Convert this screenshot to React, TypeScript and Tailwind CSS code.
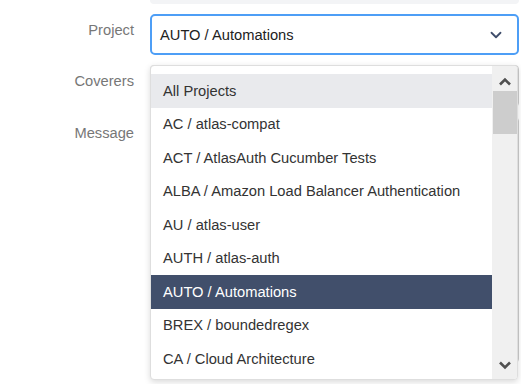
import { ChevronDown } from "lucide-react";

const projects = [
  "All Projects",
  "AC / atlas-compat",
  "ACT / AtlasAuth Cucumber Tests",
  "ALBA / Amazon Load Balancer Authentication",
  "AU / atlas-user",
  "AUTH / atlas-auth",
  "AUTO / Automations",
  "BREX / boundedregex",
  "CA / Cloud Architecture",
];

function Arrow({ up }: { up?: boolean }) {
  return (
    <svg width="12" height="9" viewBox="0 0 12 9" className="block">
      <polyline
        points={up ? "1,7.5 6,2.5 11,7.5" : "1,1.5 6,6.5 11,1.5"}
        fill="none"
        stroke="#505050"
        strokeWidth="2.6"
      />
    </svg>
  );
}

export default function App() {
  const hovered = "All Projects";
  const selected = "AUTO / Automations";

  return (
    <div
      className="relative w-[521px] h-[384px] overflow-hidden bg-white text-[14.7px] text-[#333]"
      style={{ fontFamily: '"Liberation Sans", Arial, sans-serif' }}
    >
      <div className="flex flex-col pr-[2px]">
        <div className="flex gap-[16px]">
          <div className="w-[134px]" />
          <div className="flex-1 h-[4px] bg-[#f3f4f6] rounded-b-[4px]" />
        </div>

        <div className="flex gap-[16px] mt-[10px]">
          <label className="w-[134px] text-right text-[#777] leading-[20px] pt-[6px]">Project</label>
          <div className="flex-1 h-[41px] border-2 border-[#4d9ef6] rounded-[5px] flex items-center justify-between pl-[8px] pr-[12px]">
            <span className="leading-[20px] text-[#222]">{selected}</span>
            <ChevronDown size={18} strokeWidth={2.4} className="text-[#3f4d6b]" />
          </div>
        </div>

        <div className="flex gap-[16px] mt-[10px]">
          <label className="w-[134px] text-right text-[#777] leading-[20px] pt-[6px]">Coverers</label>
          <div className="flex-1 h-[42px] border border-[#ccc] rounded-[4px]" />
        </div>

        <div className="flex gap-[16px] mt-[10px]">
          <label className="w-[134px] text-right text-[#777] leading-[20px] pt-[6px]">Message</label>
          <div className="flex-1 h-[246px] border border-[#ccc] rounded-[4px]" />
        </div>
      </div>

      <div className="absolute left-[150px] top-[65px] w-[368px] h-[315px] bg-white border border-[#dedede] rounded-[4px] shadow-[0_2px_6px_rgba(0,0,0,0.15)] flex overflow-hidden">
        <ul className="flex-1 pt-[8px]">
          {projects.map((p) => (
            <li
              key={p}
              className={
                "h-[33.5px] flex items-center px-[12px] whitespace-nowrap " +
                (p === selected
                  ? "bg-[#414f6b] text-white"
                  : p === hovered
                  ? "bg-[#e9eaed] text-[#333]"
                  : "text-[#333]")
              }
            >
              {p}
            </li>
          ))}
        </ul>
        <div className="w-[25px] bg-[#f0f0f0] flex flex-col items-center">
          <div className="h-[25px] flex items-center justify-center pt-[5px]">
            <Arrow up />
          </div>
          <div className="w-[24px] h-[43px] bg-[#cdcdcd]" />
          <div className="flex-1" />
          <div className="h-[18px] flex items-start justify-center">
            <Arrow />
          </div>
        </div>
      </div>
    </div>
  );
}
